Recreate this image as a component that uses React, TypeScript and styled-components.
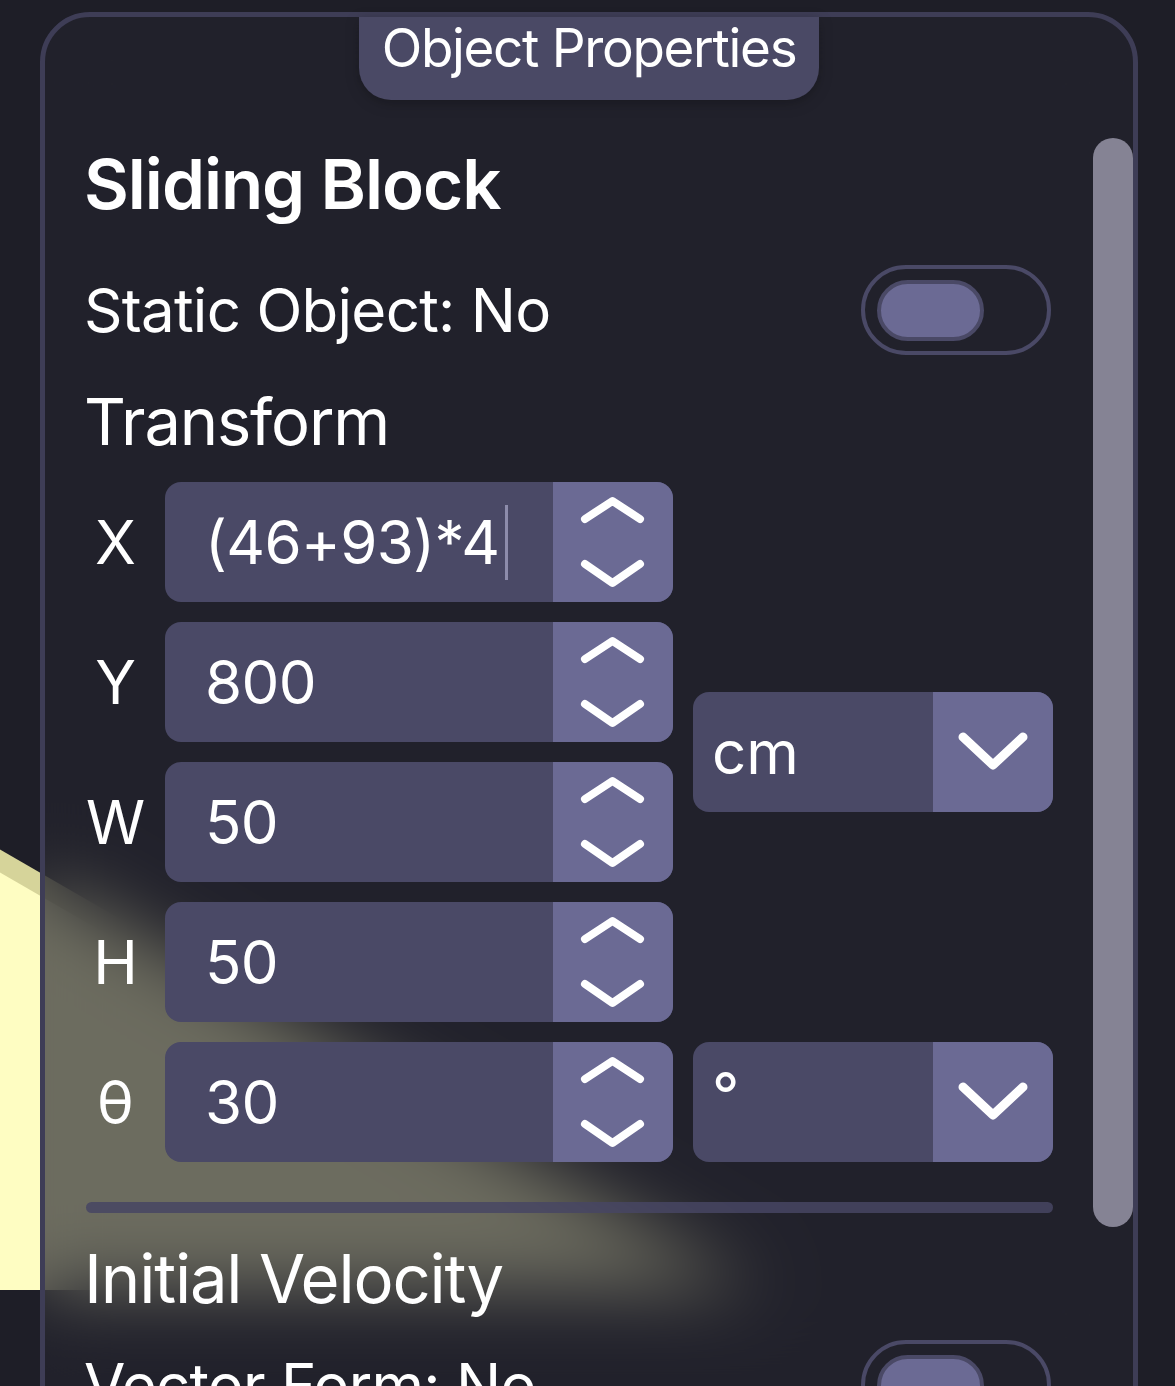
import React from 'react';
import styled, { createGlobalStyle } from 'styled-components';

const GlobalStyle = createGlobalStyle`
  html, body {
    margin: 0;
    padding: 0;
    background: #1e1e27;
  }
  body {
    font-family: Inter, "Noto Sans", Roboto, sans-serif;
    color: #fff;
  }
`;

const Page = styled.div`
  position: relative;
  width: 1175px;
  height: 1386px;
  overflow: hidden;
  box-sizing: border-box;
  padding: 12px 0 0 40px;
  background: #1e1e27;
`;

const Scene = styled.svg`
  position: absolute;
  left: 0;
  top: 0;
  width: 1175px;
  height: 1386px;
  pointer-events: none;
`;

const Panel = styled.section`
  position: relative;
  z-index: 1;
  width: 1098px;
  height: 1520px;
  box-sizing: border-box;
  border: 5px solid #3e3d56;
  border-radius: 50px;
  background: rgba(36, 36, 46, 0.67);
  backdrop-filter: blur(36px);
  display: flex;
  flex-direction: column;
`;

const Tab = styled.div`
  align-self: center;
  width: 460px;
  height: 83px;
  box-sizing: border-box;
  padding-top: 5px;
  background: #4a4965;
  border-radius: 0 0 32px 32px;
  box-shadow: 0 4px 14px rgba(0, 0, 0, 0.25);
  font-size: 53px;
  line-height: 1;
  letter-spacing: -0.025em;
  text-align: center;
  color: #fff;
`;

const ScrollThumb = styled.div`
  position: absolute;
  right: 0;
  top: 121px;
  width: 40px;
  height: 1089px;
  border-radius: 20px;
  background: #858394;
`;

const Body = styled.div`
  display: flex;
  flex-direction: column;
  padding: 0 80px 0 41px;
`;

const Title = styled.h1`
  margin: 50px 0 0 -2px;
  font-size: 69px;
  line-height: 1;
  font-weight: 600;
  letter-spacing: -0.015em;
`;

const Heading = styled.h2<{ $gap: number; $size: number }>`
  margin: ${p => p.$gap}px 0 0 -2px;
  font-size: ${p => p.$size}px;
  line-height: 1;
  font-weight: 400;
  letter-spacing: -0.018em;
`;

const ToggleRow = styled.div<{ $gap: number }>`
  margin: ${p => p.$gap}px 0 0 -2px;
  height: 90px;
  display: flex;
  align-items: center;
  justify-content: space-between;
  font-size: 60px;
  line-height: 1;
  letter-spacing: -0.012em;
`;

const Switch = styled.div`
  width: 190px;
  height: 90px;
  margin-right: 2px;
  box-sizing: border-box;
  border: 4px solid #4a4966;
  border-radius: 45px;
  padding: 11px 12px;
  display: flex;
  align-items: center;
`;

const Knob = styled.div`
  width: 107px;
  height: 61px;
  box-sizing: border-box;
  border: 4px solid #4a4966;
  border-radius: 31px;
  background: #6b6a94;
`;

const Grid = styled.div`
  margin-top: 28px;
  display: grid;
  grid-template-columns: 59px 508px 360px;
  grid-auto-rows: 120px;
  column-gap: 20px;
  row-gap: 20px;
`;

const AxisLabel = styled.div`
  grid-column: 1;
  display: flex;
  align-items: center;
  justify-content: center;
  font-size: 60px;
  line-height: 1;
`;

const Field = styled.div`
  grid-column: 2;
  display: flex;
  border-radius: 16px;
  overflow: hidden;
  background: #4a4966;
`;

const FieldValue = styled.div`
  flex: 1;
  display: flex;
  align-items: center;
  padding-left: 40px;
  font-size: 60px;
  line-height: 1;
  letter-spacing: -0.01em;
  white-space: nowrap;
`;

const Caret = styled.span`
  display: inline-block;
  width: 3px;
  height: 75px;
  margin-left: 6px;
  background: #8d8cab;
`;

const Stepper = styled.div`
  width: 120px;
  background: #6b6a94;
  flex: none;
`;

const Select = styled.div<{ $row: string }>`
  grid-column: 3;
  grid-row: ${p => p.$row};
  align-self: center;
  height: 120px;
  display: flex;
  border-radius: 16px;
  overflow: hidden;
  background: #4a4966;
`;

const SelectValue = styled.div<{ $top?: boolean }>`
  flex: 1;
  display: flex;
  align-items: ${p => (p.$top ? 'flex-start' : 'center')};
  padding: ${p => (p.$top ? '22px 0 0 19px' : '0 0 0 19px')};
  font-size: 60px;
  line-height: 1;
`;

const SelectButton = styled.div`
  width: 120px;
  flex: none;
  background: #6b6a94;
`;

const Divider = styled.div`
  margin-top: 40px;
  height: 11px;
  border-radius: 6px;
  background: rgba(72, 71, 100, 0.85);
`;

const StepperIcon = () => (
  <svg width="120" height="120" viewBox="0 0 120 120" fill="none">
    <path
      d="M32 37 L59.5 19 L87 37 M32 82 L59.5 101 L87 82"
      stroke="#fff"
      strokeWidth="8"
      strokeLinecap="round"
      strokeLinejoin="round"
    />
  </svg>
);

const ChevronDown = () => (
  <svg width="120" height="120" viewBox="0 0 120 120" fill="none">
    <path
      d="M30 45 L60 73 L90 45"
      stroke="#fff"
      strokeWidth="9"
      strokeLinecap="round"
      strokeLinejoin="round"
    />
  </svg>
);

const NumberField = ({ value, editing }: { value: string; editing?: boolean }) => (
  <Field>
    <FieldValue>
      {value}
      {editing && <Caret />}
    </FieldValue>
    <Stepper>
      <StepperIcon />
    </Stepper>
  </Field>
);

const UnitSelect = ({ value, row, top }: { value: string; row: string; top?: boolean }) => (
  <Select $row={row}>
    <SelectValue $top={top}>{value}</SelectValue>
    <SelectButton>
      <ChevronDown />
    </SelectButton>
  </Select>
);

const transform = [
  { axis: 'X', value: '(46+93)*4', editing: true },
  { axis: 'Y', value: '800' },
  { axis: 'W', value: '50' },
  { axis: 'H', value: '50' },
  { axis: 'θ', value: '30' },
];

// the incline behind the panel, seen through the frosted glass
const Incline = () => (
  <Scene viewBox="0 0 1175 1386">
    <polygon points="-20,838 762,1290 -20,1290" fill="#d6d49a" />
    <polygon points="-20,861 722,1290 -20,1290" fill="#fefdc2" />
  </Scene>
);

export default function App() {
  return (
    <Page>
      <GlobalStyle />
      <Incline />
      <Panel>
        <Tab>Object Properties</Tab>
        <ScrollThumb />
        <Body>
          <Title>Sliding Block</Title>
          <ToggleRow $gap={46}>
            Static Object: No
            <Switch>
              <Knob />
            </Switch>
          </ToggleRow>
          <Heading $gap={34} $size={65}>Transform</Heading>
          <Grid>
            {transform.map((t, i) => (
              <React.Fragment key={t.axis}>
                <AxisLabel style={{ gridRow: i + 1 }}>{t.axis}</AxisLabel>
                <NumberField value={t.value} editing={t.editing} />
              </React.Fragment>
            ))}
            <UnitSelect value="cm" row="1 / span 4" />
            <UnitSelect value="°" row="5" top />
          </Grid>
          <Divider />
          <Heading $gap={32} $size={67}>Initial Velocity</Heading>
          <ToggleRow $gap={28}>
            Vector Form: No
            <Switch>
              <Knob />
            </Switch>
          </ToggleRow>
        </Body>
      </Panel>
    </Page>
  );
}
